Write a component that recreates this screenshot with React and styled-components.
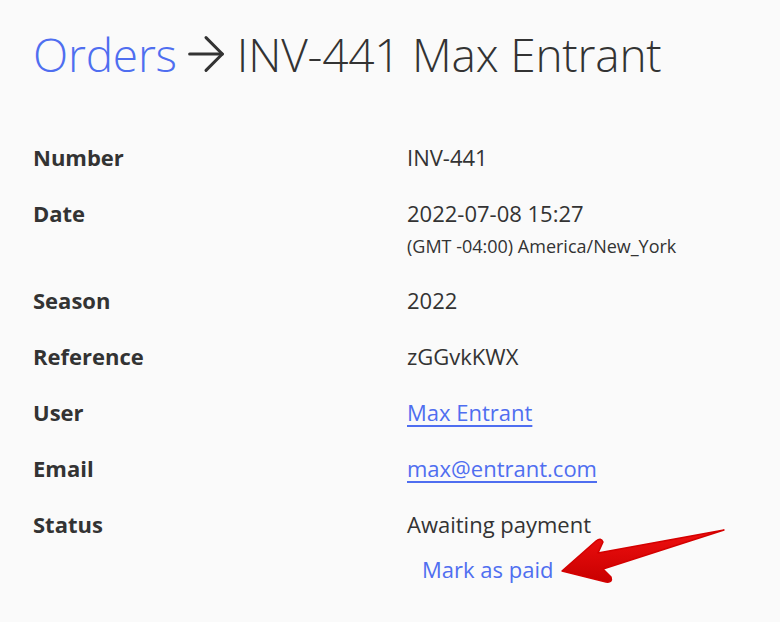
import React from "react";
import styled, { createGlobalStyle } from "styled-components";
import { ArrowRight } from "lucide-react";

const Global = createGlobalStyle`
  body {
    margin: 0;
    background: #fafafa;
    font-family: "Open Sans", "Liberation Sans", sans-serif;
    color: #333;
  }
`;

const Page = styled.div`
  position: relative;
  padding: 20px 33px 0;
  height: 622px;
  box-sizing: border-box;
  overflow: hidden;
`;

const Title = styled.h1`
  display: flex;
  align-items: center;
  margin: 0 0 55px;
  font-size: 46px;
  font-weight: 300;
  line-height: 68px;
  letter-spacing: -0.2px;
  color: #333;
  white-space: nowrap;
`;

const Crumb = styled.a`
  color: #4f6ef0;
  text-decoration: none;
`;

const Sep = styled(ArrowRight)`
  margin: 0 3px 0 1px;
  flex: none;
  color: #333;
`;

const Details = styled.dl`
  display: grid;
  grid-template-columns: 374px 1fr;
  row-gap: 28px;
  margin: 0;
  font-size: 22px;
  line-height: 28px;
`;

const Label = styled.dt`
  font-weight: 700;
  color: #333;
`;

const Value = styled.dd`
  margin: 0;
  color: #333;
`;

const Sub = styled.div`
  margin-top: 7px;
  font-size: 18px;
  line-height: 24px;
`;

const Link = styled.a`
  color: #4f6ef0;
  text-decoration: underline;
  text-underline-offset: 4px;
  text-decoration-thickness: 1.5px;
`;

const Action = styled.a`
  display: block;
  margin: 17px 0 0 15px;
  color: #4f6ef0;
  text-decoration: none;
`;

const Pointer = styled.svg`
  position: absolute;
  left: 555px;
  top: 522px;
`;

const rows = [
  ["Number", "INV-441"],
  ["Date", "2022-07-08 15:27", "(GMT -04:00) America/New_York"],
  ["Season", "2022"],
  ["Reference", "zGGvkKWX"],
  ["User", <Link href="#">Max Entrant</Link>],
  ["Email", <Link href="#">max@entrant.com</Link>],
];

export default function App() {
  return (
    <>
      <Global />
      <Page>
        <Title>
          <Crumb href="#">Orders</Crumb>
          <Sep size={56} strokeWidth={1.3} aria-label="→" />
          INV-441 Max Entrant
        </Title>
        <Details>
          {rows.map(([label, value, sub]) => (
            <React.Fragment key={label}>
              <Label>{label}</Label>
              <Value>
                {value}
                {sub && <Sub>{sub}</Sub>}
              </Value>
            </React.Fragment>
          ))}
          <Label>Status</Label>
          <Value>
            Awaiting payment
            <Action href="#">Mark as paid</Action>
          </Value>
        </Details>
        <Pointer width="180" height="70" viewBox="555 522 180 70">
          <defs>
            <linearGradient id="red" x1="0" y1="0" x2="0" y2="1">
              <stop offset="0" stopColor="#f01010" />
              <stop offset="1" stopColor="#c80000" />
            </linearGradient>
          </defs>
          <path
            d="M562 571 L596 541 Q601 537 603 542 L598 553 L724 530 L603 569 L611 577 Q613 583 606 582 Z"
            fill="url(#red)"
            stroke="#d40000"
            strokeWidth="1.5"
            strokeLinejoin="round"
          />
        </Pointer>
      </Page>
    </>
  );
}
